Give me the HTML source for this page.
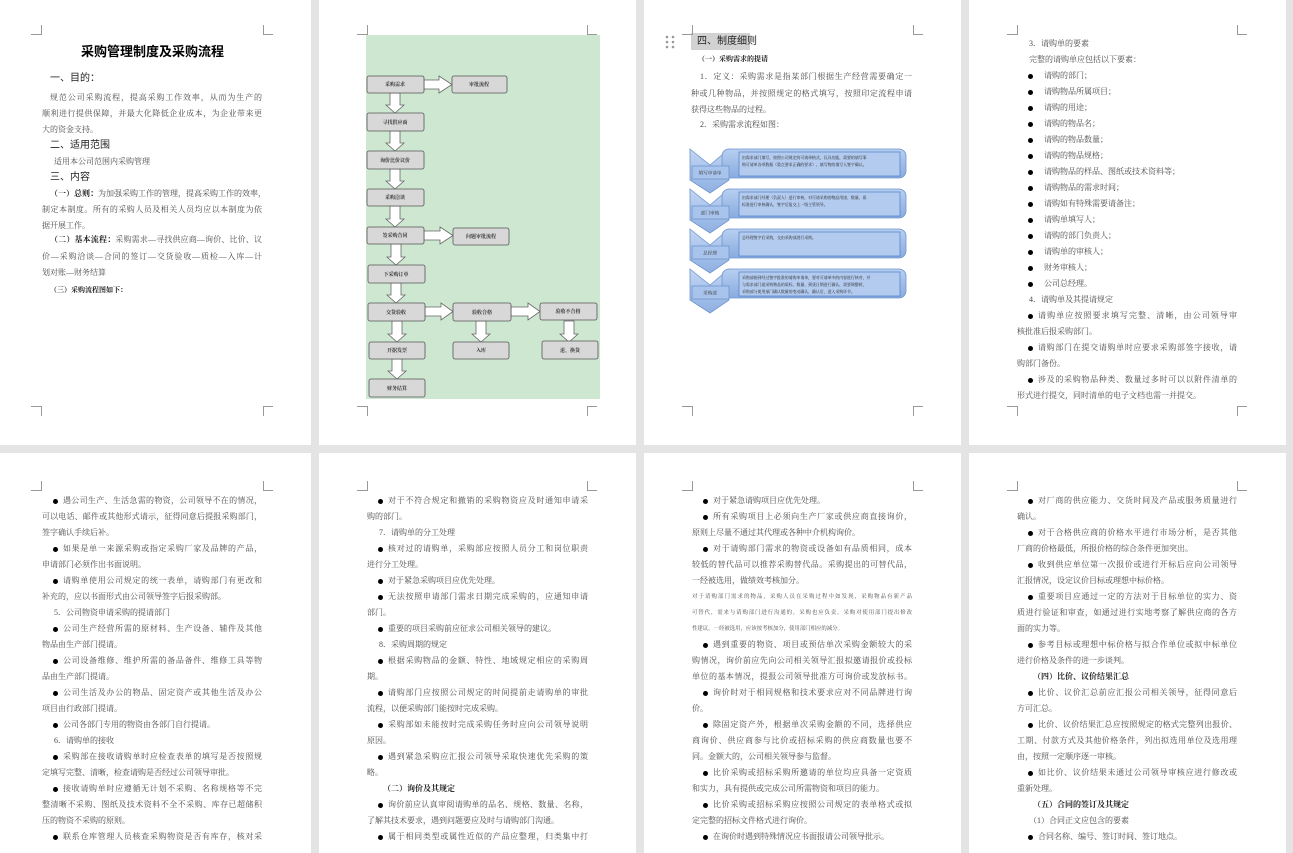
<!DOCTYPE html>
<html><head><meta charset="utf-8">
<style>
*{margin:0;padding:0;box-sizing:border-box}
body{width:1293px;height:849px;background:#e4e4e4;position:relative;overflow:hidden;font-family:"Liberation Serif","Noto Serif CJK SC",serif;color:#4a4a4a}
.pg{position:absolute;background:#fff}
.t{position:absolute;white-space:nowrap;font-size:8px;line-height:12px}
.j{text-align:justify;text-align-last:justify}
.hb{font-family:"Liberation Sans","Noto Sans CJK SC",sans-serif;font-size:10px;color:#222}
.blk{position:absolute;font-size:8px;line-height:16px}
.blk div{height:16px;white-space:nowrap;overflow:hidden}
.blk .j{text-align:justify;text-align-last:justify;white-space:normal}
.b{padding-left:21px;position:relative}
.b:before{content:"";position:absolute;left:11px;top:6px;width:5px;height:5px;border-radius:50%;background:#000}
.h{padding-left:12px}
.bd{font-weight:bold;color:#222;font-size:8px}
.sm{font-size:5.4px}
</style></head><body>
<div class="pg" style="left:0;top:0;width:311px;height:445px"></div>
<div class="pg" style="left:319px;top:0;width:317px;height:445px"></div>
<div class="pg" style="left:644px;top:0;width:317px;height:445px"></div>
<div class="pg" style="left:969px;top:0;width:317px;height:445px"></div>
<div class="pg" style="left:0;top:453px;width:311px;height:400px"></div>
<div class="pg" style="left:319px;top:453px;width:317px;height:400px"></div>
<div class="pg" style="left:644px;top:453px;width:317px;height:400px"></div>
<div class="pg" style="left:969px;top:453px;width:317px;height:400px"></div>

<!-- page 1 -->
<div class="t" style="left:0;width:305px;text-align:center;top:44px;font-size:13px;line-height:16px;font-weight:bold;color:#000;font-family:'Liberation Sans','Noto Sans CJK SC',sans-serif">采购管理制度及采购流程</div>
<div class="t hb" style="left:50px;top:73px">一、目的：</div>
<div class="t j" style="left:50px;top:92px;width:212px">规范公司采购流程，提高采购工作效率，从而为生产的</div>
<div class="t j" style="left:42px;top:108px;width:220px">顺利进行提供保障，并最大化降低企业成本，为企业带来更</div>
<div class="t" style="left:42px;top:124px">大的资金支持。</div>
<div class="t hb" style="left:50px;top:140px">二、适用范围</div>
<div class="t" style="left:54px;top:156px">适用本公司范围内采购管理</div>
<div class="t hb" style="left:50px;top:172px">三、内容</div>
<div class="t j" style="left:50px;top:188px;width:212px"><b style="color:#222">（一）总则：</b>为加强采购工作的管理，提高采购工作的效率，</div>
<div class="t j" style="left:42px;top:204px;width:220px">制定本制度。所有的采购人员及相关人员均应以本制度为依</div>
<div class="t" style="left:42px;top:220px">据开展工作。</div>
<div class="t j" style="left:50px;top:234px;width:212px"><b style="color:#222">（二）基本流程：</b>采购需求—寻找供应商—询价、比价、议</div>
<div class="t j" style="left:42px;top:251px;width:220px">价—采购洽谈—合同的签订—交货验收—质检—入库—计</div>
<div class="t" style="left:42px;top:267px">划对账—财务结算</div>
<div class="t" style="left:50px;top:284px;font-size:7px;font-weight:bold;color:#222">（三）采购流程图如下：</div>

<!-- page 3 text -->
<div class="t" style="left:691px;top:33px;width:59px;height:17px;background:#d2d2d2"></div>
<div class="t hb" style="left:697px;top:36px">四、制度细则</div>
<div class="t" style="left:698px;top:53px;font-size:7px;font-weight:bold;color:#222">（一）采购需求的提请</div>
<div class="t j" style="left:700px;top:71px;width:212px">1．定义：采购需求是指某部门根据生产经营需要确定一</div>
<div class="t j" style="left:691px;top:88px;width:221px">种或几种物品，并按照规定的格式填写，按照印定流程申请</div>
<div class="t" style="left:691px;top:104px">获得这些物品的过程。</div>
<div class="t" style="left:700px;top:119px">2．采购需求流程如图：</div>

<!-- page 4 row1 -->
<div class="blk" style="left:1017px;top:36px;width:220px">
<div style="padding-left:12px">3．请购单的要素</div>
<div style="padding-left:12px">完整的请购单应包括以下要素：</div>
<div class="b" style="padding-left:27px">请购的部门；</div>
<div class="b" style="padding-left:27px">请购物品所属项目；</div>
<div class="b" style="padding-left:27px">请购的用途；</div>
<div class="b" style="padding-left:27px">请购的物品名；</div>
<div class="b" style="padding-left:27px">请购的物品数量；</div>
<div class="b" style="padding-left:27px">请购的物品规格；</div>
<div class="b" style="padding-left:27px">请购物品的样品、图纸或技术资料等；</div>
<div class="b" style="padding-left:27px">请购物品的需求时间；</div>
<div class="b" style="padding-left:27px">请购如有特殊需要请备注；</div>
<div class="b" style="padding-left:27px">请购单填写人；</div>
<div class="b" style="padding-left:27px">请购的部门负责人；</div>
<div class="b" style="padding-left:27px">请购单的审核人；</div>
<div class="b" style="padding-left:27px">财务审核人；</div>
<div class="b" style="padding-left:27px">公司总经理。</div>
<div style="padding-left:12px">4．请购单及其提请规定</div>
<div class="b j">请购单应按照要求填写完整、清晰，由公司领导审</div>
<div>核批准后报采购部门。</div>
<div class="b j">请购部门在提交请购单时应要求采购部签字接收，请</div>
<div>购部门备份。</div>
<div class="b j">涉及的采购物品种类、数量过多时可以以附件清单的</div>
<div>形式进行提交，同时清单的电子文档也需一并提交。</div>
</div>

<!-- row2 page1 -->
<div class="blk" style="left:42px;top:493px;width:220px">
<div class="b j">遇公司生产、生活急需的物资，公司领导不在的情况，</div>
<div class="j">可以电话、邮件或其他形式请示，征得同意后提报采购部门，</div>
<div>签字确认手续后补。</div>
<div class="b j">如果是单一来源采购或指定采购厂家及品牌的产品，</div>
<div>申请部门必须作出书面说明。</div>
<div class="b j">请购单使用公司规定的统一表单，请购部门有更改和</div>
<div>补充的，应以书面形式由公司领导签字后报采购部。</div>
<div class="h">5．公司物资申请采购的提请部门</div>
<div class="b j">公司生产经营所需的原材料、生产设备、辅件及其他</div>
<div>物品由生产部门提请。</div>
<div class="b j">公司设备维修、维护所需的备品备件、维修工具等物</div>
<div>品由生产部门提请。</div>
<div class="b j">公司生活及办公的物品、固定资产或其他生活及办公</div>
<div>项目由行政部门提请。</div>
<div class="b">公司各部门专用的物资由各部门自行提请。</div>
<div class="h">6．请购单的接收</div>
<div class="b j">采购部在接收请购单时应检查表单的填写是否按照规</div>
<div>定填写完整、清晰，检查请购是否经过公司领导审批。</div>
<div class="b j">接收请购单时应遵循无计划不采购、名称规格等不完</div>
<div class="j">整清晰不采购、图纸及技术资料不全不采购、库存已超储积</div>
<div>压的物资不采购的原则。</div>
<div class="b j">联系仓库管理人员核查采购物资是否有库存，核对采</div>
</div>

<!-- row2 page2 -->
<div class="blk" style="left:367px;top:493px;width:221px">
<div class="b j">对于不符合规定和撤销的采购物资应及时通知申请采</div>
<div>购的部门。</div>
<div class="h">7．请购单的分工处理</div>
<div class="b j">核对过的请购单，采购部应按照人员分工和岗位职责</div>
<div>进行分工处理。</div>
<div class="b">对于紧急采购项目应优先处理。</div>
<div class="b j">无法按照申请部门需求日期完成采购的，应通知申请</div>
<div>部门。</div>
<div class="b">重要的项目采购前应征求公司相关领导的建议。</div>
<div class="h">8．采购周期的规定</div>
<div class="b j">根据采购物品的金额、特性、地域规定相应的采购周</div>
<div>期。</div>
<div class="b j">请购部门应按照公司规定的时间提前走请购单的审批</div>
<div>流程，以便采购部门能按时完成采购。</div>
<div class="b j">采购部如未能按时完成采购任务时应向公司领导说明</div>
<div>原因。</div>
<div class="b j">遇到紧急采购应汇报公司领导采取快速优先采购的策</div>
<div>略。</div>
<div class="h bd" style="padding-left:16px">（二）询价及其规定</div>
<div class="b j">询价前应认真审阅请购单的品名、规格、数量、名称，</div>
<div>了解其技术要求，遇到问题要应及时与请购部门沟通。</div>
<div class="b j">属于相同类型或属性近似的产品应整理，归类集中打</div>
</div>

<!-- row2 page3 -->
<div class="blk" style="left:692px;top:493px;width:220px">
<div class="b">对于紧急请购项目应优先处理。</div>
<div class="b j">所有采购项目上必须向生产厂家或供应商直接询价，</div>
<div>原则上尽量不通过其代理或各种中介机构询价。</div>
<div class="b j">对于请购部门需求的物资或设备如有品质相同，成本</div>
<div class="j">较低的替代品可以推荐采购替代品。采购提出的可替代品，</div>
<div>一经被选用，做绩效考核加分。</div>
<div class="j sm">对于请购部门需求的物品，采购人员在采购过程中如发现，采购物品有新产品</div>
<div class="j sm">可替代，需来与请购部门进行沟通的，采购也应负责，采购对使用部门提出修改</div>
<div class="sm">性建议，一经被选用，应该按考核加分，使用部门相应的减分。</div>
<div class="b j">遇到重要的物资、项目或预估单次采购金额较大的采</div>
<div class="j">购情况，询价前应先向公司相关领导汇报拟邀请报价或投标</div>
<div class="j">单位的基本情况，提报公司领导批准方可询价或发放标书。</div>
<div class="b j">询价时对于相同规格和技术要求应对不同品牌进行询</div>
<div>价。</div>
<div class="b j">除固定资产外，根据单次采购金额的不同，选择供应</div>
<div class="j">商询价、供应商参与比价或招标采购的供应商数量也要不</div>
<div>同。金额大的，公司相关领导参与监督。</div>
<div class="b j">比价采购或招标采购所邀请的单位均应具备一定资质</div>
<div>和实力，具有提供或完成公司所需物资和项目的能力。</div>
<div class="b j">比价采购或招标采购应按照公司规定的表单格式或拟</div>
<div>定完整的招标文件格式进行询价。</div>
<div class="b">在询价时遇到特殊情况应书面报请公司领导批示。</div>
</div>

<!-- row2 page4 -->
<div class="blk" style="left:1017px;top:493px;width:220px">
<div class="b j">对厂商的供应能力、交货时间及产品或服务质量进行</div>
<div>确认。</div>
<div class="b j">对于合格供应商的价格水平进行市场分析，是否其他</div>
<div>厂商的价格最低，所报价格的综合条件更加突出。</div>
<div class="b j">收到供应单位第一次报价或进行开标后应向公司领导</div>
<div>汇报情况，设定议价目标或理想中标价格。</div>
<div class="b j">重要项目应通过一定的方法对于目标单位的实力、资</div>
<div class="j">质进行验证和审查，如通过进行实地考察了解供应商的各方</div>
<div>面的实力等。</div>
<div class="b j">参考目标或理想中标价格与拟合作单位或拟中标单位</div>
<div>进行价格及条件的进一步谈判。</div>
<div class="h bd" style="padding-left:16px">（四）比价、议价结果汇总</div>
<div class="b j">比价、议价汇总前应汇报公司相关领导，征得同意后</div>
<div>方可汇总。</div>
<div class="b j">比价、议价结果汇总应按照规定的格式完整列出报价、</div>
<div class="j">工期、付款方式及其他价格条件，列出拟选用单位及选用理</div>
<div>由，按照一定顺序逐一审核。</div>
<div class="b j">如比价、议价结果未通过公司领导审核应进行修改或</div>
<div>重新处理。</div>
<div class="h bd" style="padding-left:16px">（五）合同的签订及其规定</div>
<div class="h">（1）合同正文应包含的要素</div>
<div class="b">合同名称、编号、签订时间、签订地点。</div>
</div>

<svg width="1293" height="849" style="position:absolute;left:0;top:0" font-family="Liberation Serif,Noto Serif CJK SC,serif">
<defs>
<linearGradient id="g1" x1="0" y1="0" x2="0" y2="1"><stop offset="0" stop-color="#c3d6f1"/><stop offset="1" stop-color="#8fb0e2"/></linearGradient>
<linearGradient id="g2" x1="0" y1="0" x2="0" y2="1"><stop offset="0" stop-color="#b8cff0"/><stop offset="1" stop-color="#89abe0"/></linearGradient>
</defs>
<g stroke="#999" stroke-width="1" fill="none">
<path d="M31 34.5H41.5V25M263.5 25V34.5H273M31 406.5H41.5V416M263.5 416V406.5H273"/>
<path d="M357 34.5H367.5V25M587.5 25V34.5H597M357 406.5H367.5V416M587.5 416V406.5H597"/>
<path d="M682 34.5H692.5V25M913.5 25V34.5H923M682 406.5H692.5V416M913.5 416V406.5H923"/>
<path d="M1007 34.5H1017.5V25M1237.5 25V34.5H1247M1007 406.5H1017.5V416M1237.5 416V406.5H1247"/>
<path d="M31 490.5H41.5V481M263.5 481V490.5H273"/>
<path d="M357 490.5H367.5V481M587.5 481V490.5H597"/>
<path d="M682 490.5H692.5V481M913.5 481V490.5H923"/>
<path d="M1007 490.5H1017.5V481M1237.5 481V490.5H1247"/>
</g>
<g fill="#999"><circle cx="667" cy="37" r="1.3"/><circle cx="673" cy="37" r="1.3"/><circle cx="667" cy="42" r="1.3"/><circle cx="673" cy="42" r="1.3"/><circle cx="667" cy="47" r="1.3"/><circle cx="673" cy="47" r="1.3"/></g>

<rect x="366" y="35" width="234" height="364" fill="#cde7d1"/>
<g stroke="#666" stroke-width="0.8" fill="#fff">
<path d="M390 93h10v12h4l-9 8l-9-8h4z"/>
<path d="M390 131h10v12h4l-9 8l-9-8h4z"/>
<path d="M390 169h10v12h4l-9 8l-9-8h4z"/>
<path d="M390 206h10v13h4l-9 8l-9-8h4z"/>
<path d="M391 244h10v13h4l-9 8l-9-8h4z"/>
<path d="M391 283h10v12h4l-9 8l-9-8h4z"/>
<path d="M392 321h10v13h4l-9 8l-9-8h4z"/>
<path d="M392 359h10v12h4l-9 8l-9-8h4z"/>
<path d="M476 321h10v13h4l-9 8l-9-8h4z"/>
<path d="M564 321h10v13h4l-9 8l-9-8h4z"/>
<path d="M424 80h15v-4l13 8.5l-13 8.5v-4h-15z"/>
<path d="M424 231h16v-4l13 8.5l-13 8.5v-4h-16z"/>
<path d="M425 307h16v-4l12 8.5l-12 8.5v-4h-16z"/>
<path d="M511 307h17v-4l12 8.5l-12 8.5v-4h-17z"/>
</g>
<g stroke="#555" stroke-width="0.8" fill="#d8d8d8">
<rect x="367" y="76" width="57" height="17" rx="2"/>
<rect x="452" y="76" width="55" height="17" rx="2"/>
<rect x="367" y="113" width="57" height="18" rx="2"/>
<rect x="367" y="151" width="57" height="18" rx="2"/>
<rect x="367" y="189" width="57" height="17" rx="2"/>
<rect x="367" y="227" width="57" height="17" rx="2"/>
<rect x="453" y="228" width="56" height="17" rx="2"/>
<rect x="368" y="265" width="57" height="18" rx="2"/>
<rect x="368" y="303" width="57" height="18" rx="2"/>
<rect x="453" y="303" width="58" height="18" rx="2"/>
<rect x="540" y="303" width="57" height="17" rx="2"/>
<rect x="369" y="342" width="56" height="17" rx="2"/>
<rect x="453" y="342" width="56" height="17" rx="2"/>
<rect x="542" y="341" width="56" height="18" rx="2"/>
<rect x="369" y="379" width="56" height="18" rx="2"/>
</g>
<g font-size="5" fill="#333" text-anchor="middle" font-weight="bold">
<text x="395" y="86">采购需求</text><text x="479" y="86">审批流程</text>
<text x="395" y="124">寻找供应商</text><text x="395" y="162">询价比价议价</text>
<text x="395" y="199">采购洽谈</text><text x="395" y="237">签采购合同</text>
<text x="481" y="238">问题审批流程</text><text x="396" y="276">下采购订单</text>
<text x="396" y="314">交货验收</text><text x="482" y="314">验收合格</text>
<text x="568" y="313">验收不合格</text><text x="397" y="352">开据发票</text>
<text x="481" y="352">入库</text><text x="570" y="352">退、换货</text>
<text x="397" y="390">财务结算</text>
</g>

<g>
<g stroke="#6e95cf" stroke-width="0.8">
<path d="M690 149L710 165L729 149V180L710 193L690 180Z" fill="url(#g1)"/>
<path d="M690 189L710 205L729 189V220L710 233L690 220Z" fill="url(#g1)"/>
<path d="M690 229L710 245L729 229V260L710 273L690 260Z" fill="url(#g1)"/>
<path d="M690 269L710 285L729 269V300L710 313L690 300Z" fill="url(#g1)"/>
<rect x="722" y="149" width="184" height="29" rx="7" fill="url(#g2)"/>
<rect x="722" y="189" width="184" height="29" rx="7" fill="url(#g2)"/>
<rect x="722" y="229" width="184" height="29" rx="7" fill="url(#g2)"/>
<rect x="722" y="269" width="184" height="29" rx="7" fill="url(#g2)"/>
<rect x="692" y="166" width="37" height="13" fill="#a9c4ec"/>
<rect x="692" y="206" width="37" height="13" fill="#a9c4ec"/>
<rect x="692" y="246" width="37" height="13" fill="#a9c4ec"/>
<rect x="692" y="286" width="37" height="13" fill="#a9c4ec"/>
</g>
<g stroke="#4f7cc2" stroke-width="0.7" fill="#b3cbef">
<rect x="739" y="152" width="161" height="24"/>
<rect x="739" y="192" width="161" height="24"/>
<rect x="739" y="232" width="161" height="24"/>
<rect x="739" y="272" width="161" height="24"/>
</g>
<g font-size="4.6" fill="#333" text-anchor="middle">
<text x="710" y="174.5">填写申请单</text><text x="710" y="214.5">部门审核</text>
<text x="710" y="254.5">总经理</text><text x="710" y="294.5">采购部</text>
</g>
<g font-size="3.9" fill="#222">
<text x="742" y="159">由需求部门填写，按照公司规定的可请单格式，仅具功能，需要的填写事</text>
<text x="742" y="166">购可请单各项数据（重点要求正确的要求）、填写物的填写人签字确认。</text>
<text x="742" y="199">由需求部门经理（负责人）进行审核，对可请采购的物品用途、数量、质</text>
<text x="742" y="206">标准进行审核确认，签字后报交上一级主管领导。</text>
<text x="742" y="239">总经理签字后采购，交由采购部进行采购。</text>
<text x="742" y="279">采购部接到经过签字批准的请购申请单，要对可请单中的内容进行核对，并</text>
<text x="742" y="286">与需求部门就采购物品的质标、数量、到货日期进行确认，需要调整时，</text>
<text x="742" y="293">采购部与使用部门确认数量的变动确认，确认后，进入采购环节。</text>
</g>
</g>
</svg>
</body></html>
